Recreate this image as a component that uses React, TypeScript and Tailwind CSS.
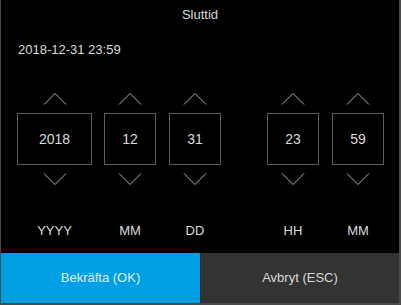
import React from 'react'

const font = { fontFamily: '"Liberation Sans", Arial, sans-serif' }

interface ColumnProps {
  value: string
  label: string
  width: string
}

function Chevron({ down }: { down?: boolean }) {
  return (
    <svg width="24" height="12" viewBox="0 0 24 12" className="block" aria-hidden>
      <polyline
        points={down ? '1,0.5 12,11.5 23,0.5' : '1,11.5 12,0.5 23,11.5'}
        fill="none"
        stroke="#b0b0b0"
        strokeWidth="1"
      />
    </svg>
  )
}

function Column({ value, label, width }: ColumnProps) {
  return (
    <div className={`flex flex-col items-center ${width}`}>
      <Chevron />
      <div className="mt-2 flex h-[52px] w-full items-center justify-center border border-[#5e5e5e] text-[14px] text-[#dcdcdc]">
        {value}
      </div>
      <div className="mt-2">
        <Chevron down />
      </div>
      <div className="mt-[39px] text-[13px] leading-none text-[#dcdcdc]">{label}</div>
    </div>
  )
}

export default function App() {
  return (
    <div
      className="flex h-[305px] w-[401px] flex-col border-b-2 border-l border-r-2 border-b-[#4a4a4a] border-l-[#4a4a4a] border-r-[#4a4a4a] bg-black"
      style={font}
    >
      <div className="pt-[7px] text-center text-[13px] leading-[15px] text-[#dcdcdc]">Sluttid</div>
      <div className="mt-[20px] pl-[17px] text-[13px] leading-[15px] text-[#dcdcdc]">2018-12-31 23:59</div>

      <div className="mt-[36px] flex pl-[16px]">
        <Column value="2018" label="YYYY" width="w-[75px]" />
        <div className="w-[12px]" />
        <Column value="12" label="MM" width="w-[52px]" />
        <div className="w-[13px]" />
        <Column value="31" label="DD" width="w-[52px]" />
        <div className="w-[46px]" />
        <Column value="23" label="HH" width="w-[52px]" />
        <div className="w-[13px]" />
        <Column value="59" label="MM" width="w-[52px]" />
      </div>

      <div className="mt-auto flex h-[50px]">
        <button className="flex w-[199px] items-center justify-center bg-[#009fe3] text-[13px] text-[#dff1fa]">
          Bekräfta (OK)
        </button>
        <button className="flex flex-1 items-center justify-center border-l border-[#262626] bg-[#333333] text-[13px] text-[#d8d8d8]">
          Avbryt (ESC)
        </button>
      </div>
    </div>
  )
}
